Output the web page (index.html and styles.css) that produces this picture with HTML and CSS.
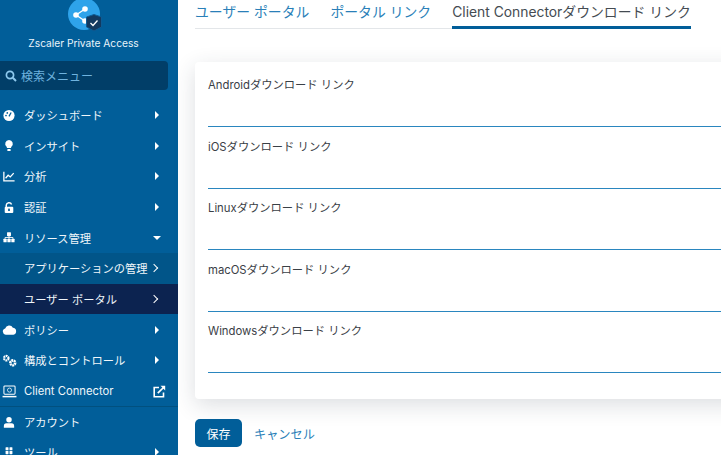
FILE: index.html
```html
<!DOCTYPE html>
<html lang="ja">
<head>
<meta charset="utf-8">
<title>Client Connector</title>
<link rel="stylesheet" href="styles.css">
</head>
<body>
<div class="app">
  <aside class="sidebar">
    <div class="brand">
      <svg class="logo" width="36" height="33" viewBox="0 0 36 33">
        <circle cx="16" cy="14" r="16" fill="#2ea3ea"/>
        <g stroke="#fff" stroke-width="1.4"><path d="M8 15 L17 9 M8 15 L17 21"/></g>
        <circle cx="8" cy="15" r="2.8" fill="#fff"/><circle cx="17" cy="9" r="2.8" fill="#fff"/><circle cx="17" cy="21" r="2.8" fill="#fff"/>
        <path d="M26 14.5 L33.5 17 V27 L26 31 L18.5 27 V17 Z" fill="#12395f" stroke="#0d5c95"/>
        <path d="M22.5 23 L25 25.5 L29.5 20.5" fill="none" stroke="#fff" stroke-width="1.3"/>
      </svg>
      <div class="brand-name">Zscaler Private Access</div>
    </div>
    <div class="search">
      <svg width="12" height="12" viewBox="0 0 12 12"><circle cx="5" cy="5" r="3.6" fill="none" stroke="#8ec9ee" stroke-width="1.7"/><path d="M7.8 7.8 L11 11" stroke="#8ec9ee" stroke-width="2"/></svg>
      <span>検索メニュー</span>
    </div>
    <nav class="nav">
      <div class="row"><svg class="ic" viewBox="0 0 14 14"><circle cx="7" cy="7" r="6.5" fill="#fff"/><path d="M7 8 L9.5 3.5" stroke="#005e99" stroke-width="1.5"/><circle cx="3.5" cy="7" r="1" fill="#005e99"/><circle cx="5" cy="4" r="1" fill="#005e99"/></svg><span class="lbl">ダッシュボード</span><i class="tri"></i></div>
      <div class="row"><svg class="ic" viewBox="0 0 14 14"><path d="M7 0.5 A4.6 4.6 0 0 1 9.8 8.6 L9.3 10 H4.7 L4.2 8.6 A4.6 4.6 0 0 1 7 0.5 Z" fill="#fff"/><rect x="5" y="11" width="4" height="2.4" rx="1" fill="#fff"/></svg><span class="lbl">インサイト</span><i class="tri"></i></div>
      <div class="row"><svg class="ic" viewBox="0 0 14 14"><path d="M1 1.5 V12 H13.5" fill="none" stroke="#fff" stroke-width="1.5"/><path d="M3 9 L6 5.5 L8.5 7.5 L12.5 3" fill="none" stroke="#fff" stroke-width="1.5"/></svg><span class="lbl">分析</span><i class="tri"></i></div>
      <div class="row"><svg class="ic" viewBox="0 0 14 14"><path d="M3.8 6.5 V4.2 A3.2 3.2 0 0 1 10 3.5" fill="none" stroke="#fff" stroke-width="1.7"/><rect x="2" y="6" width="10" height="7.5" rx="1.2" fill="#fff"/><rect x="6" y="8.3" width="2" height="2.8" fill="#005e99"/></svg><span class="lbl">認証</span><i class="tri"></i></div>
      <div class="row"><svg class="ic" viewBox="0 0 14 14"><rect x="4.7" y="1" width="4.6" height="4.4" rx=".6" fill="#fff"/><rect x="0.5" y="8.5" width="3.8" height="4" rx=".6" fill="#fff"/><rect x="5.1" y="8.5" width="3.8" height="4" rx=".6" fill="#fff"/><rect x="9.7" y="8.5" width="3.8" height="4" rx=".6" fill="#fff"/><path d="M2.4 8.5 V7 H11.6 V8.5 M7 5 V8.5" fill="none" stroke="#fff"/></svg><span class="lbl">リソース管理</span><i class="tri-down"></i></div>
      <div class="row sub"><span class="lbl">アプリケーションの管理</span><i class="chev"></i></div>
      <div class="row sub active"><span class="lbl">ユーザー ポータル</span><i class="chev"></i></div>
      <div class="row"><svg class="ic wide" viewBox="0 0 16 12"><path d="M4 11.5 A3.3 3.3 0 0 1 3.4 5 A4.4 4.4 0 0 1 11.6 4.2 A3.7 3.7 0 0 1 12.2 11.5 Z" fill="#fff"/></svg><span class="lbl">ポリシー</span><i class="tri"></i></div>
      <div class="row"><svg class="ic wide" viewBox="0 0 16 14"><circle cx="4.5" cy="4.5" r="2.4" fill="none" stroke="#fff" stroke-width="2.4" stroke-dasharray="1.8 .6"/><circle cx="11.5" cy="9.5" r="2.6" fill="none" stroke="#fff" stroke-width="2.8" stroke-dasharray="2 .6"/></svg><span class="lbl">構成とコントロール</span><i class="tri"></i></div>
      <div class="row cc"><svg class="ic wide" viewBox="0 0 16 14"><rect x="2" y="1" width="12" height="9" rx="1" fill="none" stroke="#fff" stroke-width="1.1"/><path d="M0.5 12.5 H15.5" stroke="#fff" stroke-width="1.6"/><circle cx="8" cy="5.5" r="2.2" fill="none" stroke="#fff" stroke-width=".8"/></svg><span class="lbl">Client Connector</span>
        <svg class="ext" width="13" height="13" viewBox="0 0 13 13"><path d="M6 2.5 H1.2 V11.8 H10.5 V7.5" fill="none" stroke="#fff" stroke-width="1.6"/><path d="M4.8 8.2 L11 2" stroke="#fff" stroke-width="1.7"/><path d="M7.5 .8 H12.2 V5.5 Z" fill="#fff"/></svg>
      </div>
      <div class="row account"><svg class="ic" viewBox="0 0 14 14"><circle cx="7" cy="3.8" r="3.2" fill="#fff"/><path d="M1 13 V11 Q1 8 4 8 H10 Q13 8 13 11 V13 Z" fill="#fff"/></svg><span class="lbl">アカウント</span></div>
      <div class="row"><svg class="ic" viewBox="0 0 14 14"><g fill="#fff"><rect x="3" y="1" width="3.4" height="3.4" rx=".6"/><rect x="7.6" y="1" width="3.4" height="3.4" rx=".6"/><rect x="3" y="5.3" width="3.4" height="3.4" rx=".6"/><rect x="7.6" y="5.3" width="3.4" height="3.4" rx=".6"/><rect x="3" y="9.6" width="3.4" height="3.4" rx=".6"/><rect x="7.6" y="9.6" width="3.4" height="3.4" rx=".6"/></g></svg><span class="lbl">ツール</span><i class="tri"></i></div>
    </nav>
  </aside>
  <main class="main">
    <div class="tabs">
      <div class="tab">ユーザー ポータル</div>
      <div class="tab">ポータル リンク</div>
      <div class="tab current">Client Connectorダウンロード リンク</div>
    </div>
    <section class="card">
      <div class="field"><label>Androidダウンロード リンク</label><div class="input"></div></div>
      <div class="field"><label>iOSダウンロード リンク</label><div class="input"></div></div>
      <div class="field"><label>Linuxダウンロード リンク</label><div class="input"></div></div>
      <div class="field"><label>macOSダウンロード リンク</label><div class="input"></div></div>
      <div class="field"><label>Windowsダウンロード リンク</label><div class="input"></div></div>
    </section>
    <div class="actions">
      <button class="save">保存</button>
      <span class="cancel">キャンセル</span>
    </div>
  </main>
</div>
</body>
</html>
```

FILE: styles.css
```css
* { box-sizing: border-box; }
html, body { margin: 0; height: 100%; overflow: hidden; background: #fff; }
body { font-family: Inter, "Noto Sans CJK JP", sans-serif; }
.app { display: flex; height: 455px; width: 721px; overflow: hidden; }
.sidebar { flex: 0 0 178px; height: 455px; background: #015e99; color: #fff; overflow: hidden; }
.brand { display: flex; flex-direction: column; align-items: center; height: 61px; }
.logo { display: block; margin-left: -6px; }
.brand-name { font-size: 10.2px; line-height: 14px; margin-top: 3px; margin-left: -11px; color: #eaf4fb; }
.search { margin-right: 10px; height: 29px; background: #013e68; border-radius: 0 4px 4px 0; display: flex; align-items: center; gap: 4px; padding-left: 5px; color: #6fb3df; font-size: 12px; }
.nav { margin-top: 9.5px; }
.row { height: 30.7px; display: flex; align-items: center; padding-left: 24px; padding-right: 19px; position: relative; font-size: 11.25px; color: #f0f6fa; }
.ic { position: absolute; left: 3px; top: 9px; width: 12px; height: 13px; }
.ic.wide { left: 2px; width: 15px; }
.lbl { flex: 1; white-space: nowrap; }
.tri { width: 0; height: 0; border-left: 4px solid #fff; border-top: 4px solid transparent; border-bottom: 4px solid transparent; }
.tri-down { width: 0; height: 0; border-top: 4px solid #fff; border-left: 4px solid transparent; border-right: 4px solid transparent; margin-right: -2px; }
.chev { width: 6px; height: 6px; border-top: 1.5px solid #fff; border-right: 1.5px solid #fff; transform: rotate(45deg); margin-right: 2px; }
.sub { background: #015589; }
.active { background: #0c2350; }
.cc { padding-right: 12px; }
.account { border-top: 1px solid #01507f; }
.main { flex: 1; padding-left: 17px; min-width: 0; }
.tabs { display: flex; gap: 21px; height: 29px; border-bottom: 1px solid #e3e6e9; font-size: 13.85px; line-height: 25px; white-space: nowrap; width: 495px; }
.tab { color: #2a7fb8; }
.tab.current { color: #444b52; height: 29px; border-bottom: 3px solid #015e99; }
.card { margin-top: 33px; width: 600px; height: 337px; background: #fff; border-radius: 4px; box-shadow: 0 6px 22px rgba(40, 50, 70, .16); padding: 14px 13px 0; }
.field { height: 61.5px; }
.field label { display: block; font-size: 11.3px; line-height: 18px; color: #3a4046; }
.input { height: 33px; border-bottom: 1px solid #2a86bf; }
.actions { display: flex; align-items: flex-start; gap: 12px; margin-top: 20px; }
.save { width: 47px; height: 28px; background: #015e99; border: 0; border-radius: 5px; color: #fff; font: inherit; font-size: 12px; padding: 0; }
.cancel { color: #2a7fb8; font-size: 12.2px; line-height: 32px; }
```
